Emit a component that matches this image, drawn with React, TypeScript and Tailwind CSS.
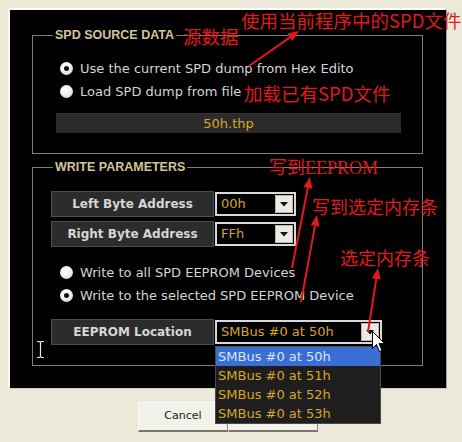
import type { ReactNode } from 'react'

const RED = '#e01a1a'

function Radio({ checked }: { checked?: boolean }) {
  return (
    <span className="w-[13px] h-[13px] shrink-0 rounded-full bg-[radial-gradient(circle_at_40%_35%,#ffffff_0%,#f2f2f2_45%,#bdbdbd_100%)] flex items-center justify-center">
      {checked && <span className="w-[5px] h-[5px] rounded-full bg-[#111]" />}
    </span>
  )
}

function RadioRow({ checked, label, clip }: { checked?: boolean; label: string; clip?: boolean }) {
  return (
    <div className="h-[23px] flex items-center gap-[7px]">
      <Radio checked={checked} />
      <span
        className={
          clip
            ? 'w-[274px] overflow-hidden whitespace-nowrap text-[13px] text-[#d4d4d4]'
            : 'whitespace-nowrap text-[13px] text-[#d4d4d4]'
        }
      >
        {label}
      </span>
    </div>
  )
}

function DropArrow() {
  return (
    <svg width="8" height="5" viewBox="0 0 8 5">
      <path d="M0 0h8L4 4.5z" fill="#111" />
    </svg>
  )
}

function Combo({ value, wide }: { value: string; wide?: boolean }) {
  return (
    <div
      className={
        (wide ? 'w-[167px]' : 'w-[81px]') +
        ' h-[24px] flex border-2 border-[#d9d9d9] bg-black'
      }
    >
      <span className="flex-1 pl-[4px] text-[13px] leading-[20px] text-[#d8a52b] whitespace-nowrap overflow-hidden">
        {value}
      </span>
      <span className="w-[18px] my-px mr-px flex items-center justify-center bg-[#ebe9e1] border border-[#b9b6aa]">
        <DropArrow />
      </span>
    </div>
  )
}

function FieldLabel({ children }: { children: ReactNode }) {
  return (
    <div className="w-[163px] h-[26px] flex items-center justify-center bg-[#2c2c2c] border border-[#4d4d4d] text-[12px] font-bold text-[#d6d6d6]">
      {children}
    </div>
  )
}

function Group({ title, children }: { title: string; children: ReactNode }) {
  return (
    <fieldset className="border border-[#7d7d7d]">
      <legend className="ml-[20px] px-[2px] text-[12.5px] leading-[14px] font-bold text-[#d3c49b] font-['Liberation_Sans',sans-serif]">
        {title}
      </legend>
      {children}
    </fieldset>
  )
}

function SourceGroup() {
  return (
    <Group title="SPD SOURCE DATA">
      <div className="pt-[15px] pb-[20px] pl-[23px] pr-[21px]">
        <div className="pl-[4px]">
          <RadioRow checked clip label="Use the current SPD dump from Hex Editor" />
          <RadioRow label="Load SPD dump from file" />
        </div>
        <div className="mt-[10px] h-[20px] flex items-center justify-center bg-[#2b2b2b] border-t border-[#353535] text-[13px] text-[#d8a52b]">
          50h.thp
        </div>
      </div>
    </Group>
  )
}

function WriteGroup() {
  return (
    <Group title="WRITE PARAMETERS">
      <div className="pt-[17px] pb-[20px] pl-[18px]">
        <div className="flex items-center gap-[1px]">
          <FieldLabel>Left Byte Address</FieldLabel>
          <Combo value="00h" />
        </div>
        <div className="mt-[4px] flex items-center gap-[1px]">
          <FieldLabel>Right Byte Address</FieldLabel>
          <Combo value="FFh" />
        </div>
        <div className="mt-[14px] pl-[9px]">
          <RadioRow label="Write to all SPD EEPROM Devices" />
          <RadioRow checked label="Write to the selected SPD EEPROM Device" />
        </div>
        <div className="mt-[12px] flex items-center gap-[1px]">
          <FieldLabel>EEPROM Location</FieldLabel>
          <Combo wide value="SMBus #0 at 50h" />
        </div>
      </div>
    </Group>
  )
}

function DropdownList() {
  const items = ['SMBus #0 at 50h', 'SMBus #0 at 51h', 'SMBus #0 at 52h', 'SMBus #0 at 53h']
  return (
    <div className="absolute left-[215px] top-[346px] w-[166px] bg-[#1e1e1e] border border-[#4a4a4a]">
      {items.map((it, i) => (
        <div
          key={it}
          className={
            i === 0
              ? 'h-[19px] pl-[2px] text-[13px] leading-[19px] bg-[#3a6ed3] text-[#d6e4ff]'
              : 'h-[19px] pl-[2px] text-[13px] leading-[19px] text-[#d8a52b]'
          }
        >
          {it}
        </div>
      ))}
    </div>
  )
}

function Arrow({ x1, y1, x2, y2 }: { x1: number; y1: number; x2: number; y2: number }) {
  const a = Math.atan2(y2 - y1, x2 - x1)
  const bx = x2 - 11 * Math.cos(a)
  const by = y2 - 11 * Math.sin(a)
  const px = -Math.sin(a) * 4.5
  const py = Math.cos(a) * 4.5
  return (
    <g>
      <line x1={x1} y1={y1} x2={bx} y2={by} stroke={RED} strokeWidth="2" />
      <polygon points={`${x2},${y2} ${bx + px},${by + py} ${bx - px},${by - py}`} fill={RED} />
    </g>
  )
}

function Note({ x, y, size, children }: { x: number; y: number; size: 18 | 19; children: ReactNode }) {
  return (
    <div
      className={
        (size === 19 ? 'text-[18.5px] ' : 'text-[18px] ') +
        "absolute leading-none whitespace-nowrap text-[#e01a1a] font-['Noto_Sans_CJK_SC',sans-serif]"
      }
      style={{ left: x, top: y }}
    >
      {children}
    </div>
  )
}

function Annotations() {
  return (
    <>
      <svg className="absolute inset-0 pointer-events-none" width="462" height="442">
        <Arrow x1={249} y1={66} x2={299} y2={31} />
        <Arrow x1={292} y1={268} x2={310} y2={177} />
        <Arrow x1={301} y1={302} x2={317} y2={215} />
        <Arrow x1={368} y1={332} x2={378} y2={268} />
      </svg>
      <Note x={241} y={11} size={19}>使用当前程序中的SPD文件</Note>
      <Note x={183} y={27} size={19}>源数据</Note>
      <Note x={244} y={84} size={19}>加载已有SPD文件</Note>
      <Note x={269} y={157} size={18}>
        写到<span className="font-['Liberation_Serif',serif]">EEPROM</span>
      </Note>
      <Note x={312} y={197} size={18}>写到选定内存条</Note>
      <Note x={340} y={248} size={18}>选定内存条</Note>
    </>
  )
}

function Cursors() {
  return (
    <>
      <svg className="absolute left-[36px] top-[340px]" width="9" height="19" viewBox="0 0 9 19">
        <path d="M1 1.5h2.5l1 1 1-1H8M4.5 2.5v14M1 17.5h2.5l1-1 1 1H8" stroke="#e6e6e6" strokeWidth="1.2" fill="none" />
      </svg>
      <svg className="absolute left-[372px] top-[331px]" width="14" height="22" viewBox="0 0 14 22">
        <path d="M0.5 0.5V17.5L4.5 13.5L7.5 20.5L10 19.5L7 12.5H12.5Z" fill="#fff" stroke="#000" strokeWidth="1" />
      </svg>
    </>
  )
}

function XpButton({ children }: { children?: ReactNode }) {
  return (
    <div className="w-[90px] h-[30px] flex items-center justify-center bg-[#f2f1ea] border border-t-white border-l-white border-r-[#8a877b] border-b-2 border-b-[#7a776b] text-[11px] text-[#1a1a1a]">
      {children}
    </div>
  )
}

export default function App() {
  return (
    <div className="relative w-[462px] h-[442px] overflow-hidden bg-[#ece9d8] font-['DejaVu_Sans',sans-serif] select-none">
      <div className="ml-[8px] mt-[8px] w-[439px] border-l-2 border-t-2 border-r border-b border-l-[#fbfaf6] border-t-[#fbfaf6] border-r-[#a6a396] border-b-[#cfccbf]">
        <div className="h-[378px] bg-black pl-[22px] pr-[23px] pt-[18px] flex flex-col gap-[6px]">
          <SourceGroup />
          <WriteGroup />
        </div>
      </div>
      <div className="mt-[13px] pl-[138px] flex">
        <XpButton>Cancel</XpButton>
        <XpButton />
      </div>
      <DropdownList />
      <Annotations />
      <Cursors />
    </div>
  )
}
